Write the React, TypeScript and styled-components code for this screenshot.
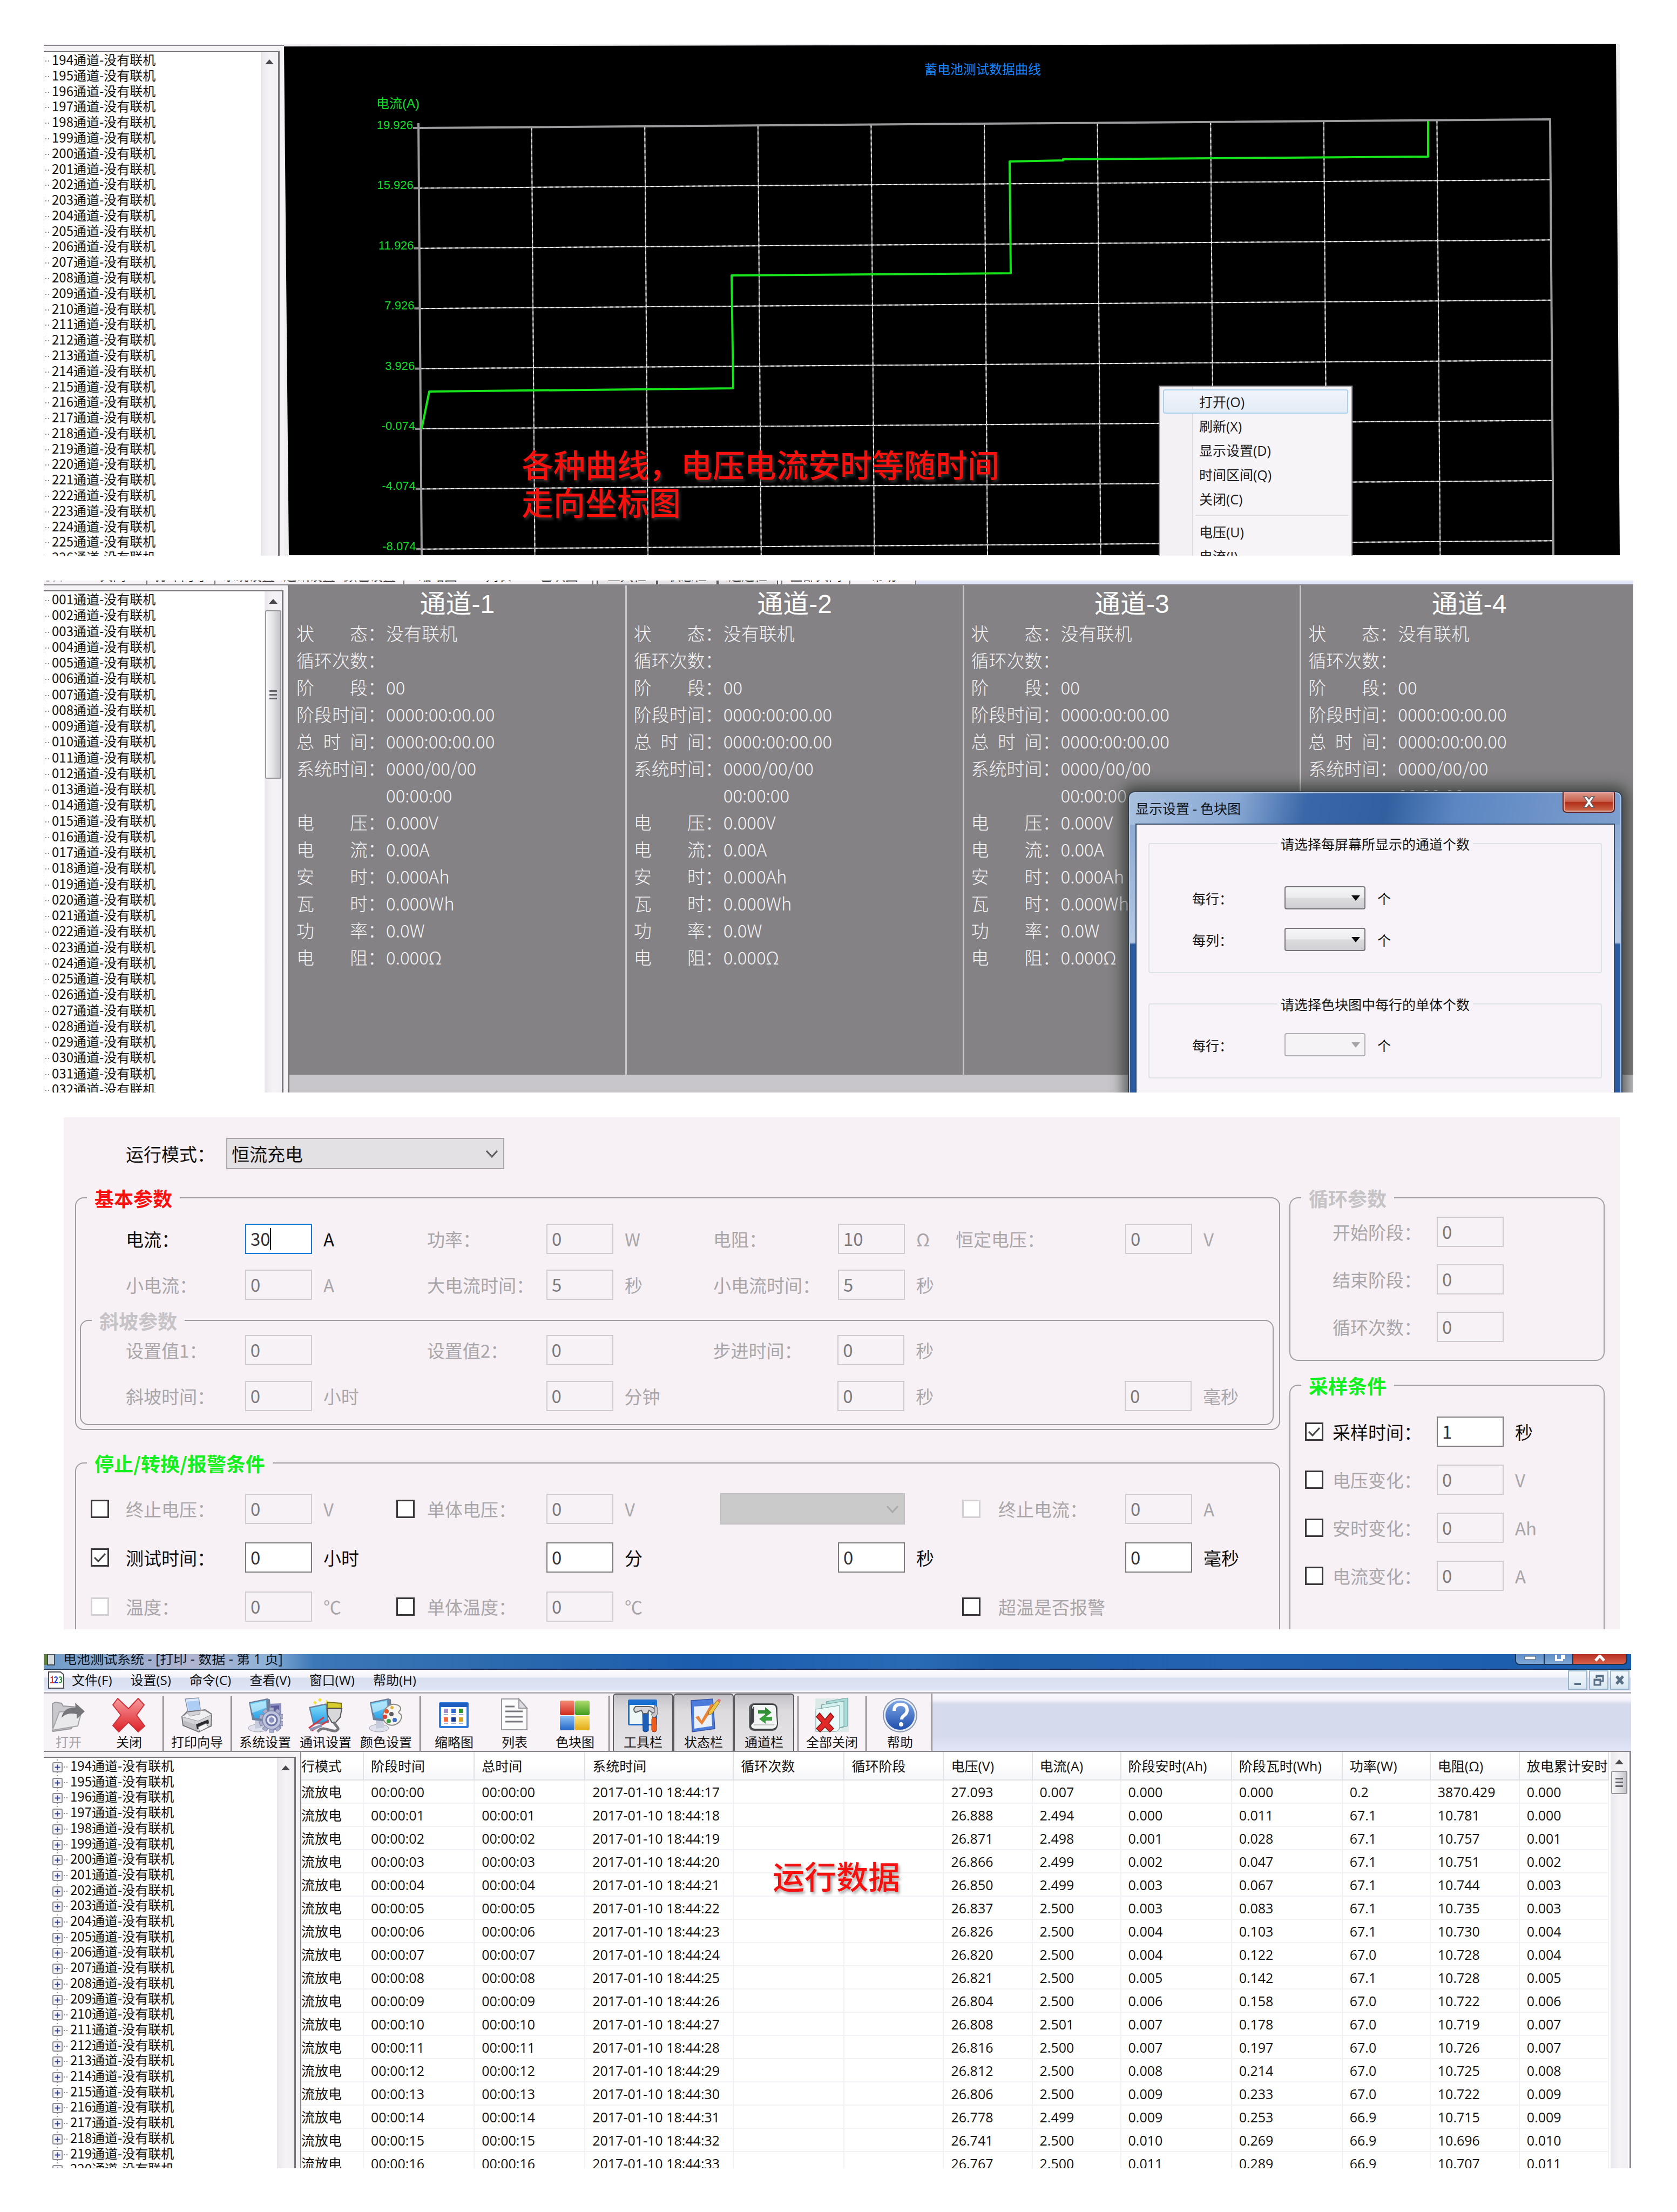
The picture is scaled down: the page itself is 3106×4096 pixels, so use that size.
import React, { useId } from "react";
import styled, { createGlobalStyle, css } from "styled-components";

const UI = `"Liberation Sans", "Noto Sans CJK SC", sans-serif`;
const SEGOE = `"Open Sans", "Noto Sans CJK SC", sans-serif`;
const CJK = `"Noto Sans CJK SC", sans-serif`;

const GlobalStyle = createGlobalStyle`
  *, *::before, *::after { box-sizing: border-box; }
  body { margin: 0; background: #fff; font-family: ${UI}; color: #111; }
  button, input, select { font: inherit; color: inherit; margin: 0; }
  ul, dl, dd, dt, h2, p { margin: 0; padding: 0; list-style: none; font-weight: inherit; }
`;

const Page = styled.main`
  display: flex;
  flex-direction: column;
  gap: 46px;
  padding: 81px 81px 80px;
  background: #fff;
`;

const Panel = styled.section<{ $end?: number; $start?: number; $height?: number }>`
  position: relative;
  height: ${(p) => p.$height ?? 948}px;
  overflow: hidden;
  margin-left: ${(p) => p.$start ?? 0}px;
  margin-right: ${(p) => p.$end ?? 0}px;
  display: flex;
  flex-direction: column;
`;

const Split = styled.div`
  flex: 1;
  min-height: 0;
  display: flex;
`;

/* ---------- channel tree ---------- */

const Sidebar = styled.aside<{ $width: number }>`
  flex: none;
  width: ${(p) => p.$width}px;
  padding: 9px 8px 0 0;
  background: #f6f3f7;
  overflow: hidden;
`;

const TreeFrame = styled.div`
  display: flex;
  height: 1000px;
  background: #fff;
  border-top: 2px solid #77747a;
  border-right: 3px solid #77747a;
`;

const TreeList = styled.ul<{ $height: number; $shift: number }>`
  flex: 1;
  height: ${(p) => p.$height}px;
  margin-left: ${(p) => p.$shift}px;
  display: grid;
  grid-auto-rows: 1fr;
  overflow: hidden;
`;

const TreeRow = styled.li`
  display: flex;
  align-items: center;
  padding-left: 16px;
  font-family: ${CJK};
  font-size: 24px;
  line-height: 28px;
  height: 28px;
  white-space: nowrap;
`;

const Expander = styled.svg`
  flex: none;
  width: 33px;
  height: 28px;
  margin-top: 6px;
`;

const ScrollTrack = styled.div`
  flex: none;
  width: 32px;
  background: linear-gradient(90deg, #e9e7eb, #f5f3f6 50%, #f1eff3);
  display: flex;
  flex-direction: column;
  align-items: center;
`;

const ScrollArrow = styled.span`
  margin: 14px 0 12px;
  border: 8px solid transparent;
  border-top: 0;
  border-bottom: 9px solid #4b494e;
`;

const ScrollThumb = styled.span<{ $height: number }>`
  width: 30px;
  height: ${(p) => p.$height}px;
  border: 2px solid #98969b;
  border-radius: 3px;
  background: linear-gradient(90deg, #f8f8f9, #e2e1e5 50%, #c4c3c9);
  display: flex;
  flex-direction: column;
  align-items: center;
  justify-content: center;
  gap: 4px;
  &::before, &::after { content: ""; width: 14px; height: 3px; background: #67656b; }
`;

const ThumbBar = styled.i`
  width: 14px;
  height: 3px;
  background: #67656b;
`;

const Scrollbar = ({ thumb }: { thumb?: number }) => (
  <ScrollTrack aria-hidden="true">
    <ScrollArrow />
    {thumb && (
      <ScrollThumb $height={thumb}>
        <ThumbBar />
      </ScrollThumb>
    )}
  </ScrollTrack>
);

type TreeProps = { first: number; count: number; height: number; width: number; shift: number; thumb?: number };

const ChannelTree = ({ first, count, height, width, shift, thumb }: TreeProps) => (
  <Sidebar $width={width}>
    <TreeFrame>
      <TreeList $height={height} $shift={shift}>
        {Array.from({ length: count }, (_, i) => (
          <TreeRow key={i}>
            <Expander viewBox="0 0 33 28" aria-hidden="true">
              <path d="M9 0v5M9 23v5M21 14h10" stroke="#8b898e" strokeWidth="2" strokeDasharray="2 3" fill="none" />
              <rect x="1" y="6" width="17" height="17" rx="2" fill="#f4f4f6" stroke="#918f95" strokeWidth="2" />
              <path d="M4.500 14.500h10M9.500 9.500v10" stroke="#37438c" strokeWidth="2" />
            </Expander>
            {String(first + i).padStart(3, "0")}通道-没有联机
          </TreeRow>
        ))}
      </TreeList>
      <Scrollbar thumb={thumb} />
    </TreeFrame>
  </Sidebar>
);

/* ---------- toolbar ---------- */

const ToolbarBar = styled.div`
  flex: none;
  display: flex;
  height: 108px;
  border-bottom: 2px solid #87858b;
  background: linear-gradient(#fbfaff 0, #f3f2fb 12px, #d5daec 20px, #d6daed 75%, #e3e6f8);
`;

const ToolGroup = styled.div`
  display: flex;
  padding-right: 2px;
  background: #f7f3f7;
  border-right: 2px solid #8b898f;
`;

const ToolButton = styled.button<{ $pressed?: boolean; $first?: boolean }>`
  flex: none;
  width: 112px;
  padding: 7px 0 0;
  margin-left: ${(p) => (p.$first ? -10 : 0)}px;
  display: flex;
  flex-direction: column;
  align-items: center;
  border: 0;
  background: none;
  font-family: ${CJK};
  font-size: 24px;
  line-height: 32px;
  white-space: nowrap;
  color: #111;
  ${(p) =>
    p.$pressed &&
    css`
      padding-top: 5px;
      border: 2px solid #5d5b60;
      border-bottom: 0;
      border-radius: 6px 6px 0 0;
      background: linear-gradient(#c4c2c6, #dddbde 30%, #e5e3e6);
    `}
  &:disabled { color: #a5a3a7; }
  svg { width: 66px; height: 66px; flex: none; }
`;

const ToolSeparator = styled.span`
  flex: none;
  width: 2px;
  margin: 4px 6px 0;
  background: #77757a;
`;

const Monitor = () => (
  <>
    <ellipse cx="20" cy="57" rx="18" ry="7" fill="#dfe1ec" stroke="#a0a3b5" />
    <path d="M14 42l14 2 2 12-16 2z" fill="#c8cbdb" />
    <path d="M3 9l34-7 5 2 2 34-8 7-27-3z" fill="#6c7f9b" />
    <path d="M5 11l30-6 3 36-25-3z" fill="url(#screen)" />
    <path d="M6 13l28-6 1 12-26 10z" fill="#d9f2fc" opacity=".6" />
  </>
);

const icons: Record<string, React.ReactNode> = {
  open: (
    <>
      <path d="M3 12l5-3 12 2 3 5 25 2-2 22-8 18-34 5z" fill="#c9c8cc" stroke="#9b999f" strokeWidth="2" />
      <path d="M3 61L16 27l42-4-8 30z" fill="#e9e8eb" stroke="#a7a5aa" strokeWidth="2" />
      <path d="M20 38c2-14 12-20 26-19l-1-9 18 16-15 14v-9c-12-2-20-1-28 7z" fill="#77767b" />
    </>
  ),
  close: (
    <path
      d="M12 2L32 21 50 2 61 14 47 33 62 53 50 64 32 46 14 64 3 52 18 33 3 14z"
      fill="url(#red)"
      stroke="#c8323a"
      strokeWidth="2"
      strokeLinejoin="round"
    />
  ),
  print: (
    <>
      <path d="M11 3l25-2 4 28-22 6z" fill="#dceafc" stroke="#8593ab" strokeWidth="1.500" />
      <path d="M14 8l22-2 3 19-20 5z" fill="#aecdf4" />
      <path d="M5 36l9-9 34-4 12 8-1 22-23 11L7 52z" fill="#d4d4d8" stroke="#77767c" strokeWidth="2" />
      <path d="M5 36l30 8 25-12-12-7-9-1-1 7-18 4-4-6z" fill="#f0f0f3" stroke="#98979d" />
      <path d="M8 43l27 9v10L8 51z" fill="#bcbcc2" />
      <path d="M31 50l23-9 1 7-22 11z" fill="#2d2d31" />
      <path d="M35 55l15-7 4 7-16 8z" fill="#f7f7f8" stroke="#77767c" />
    </>
  ),
  system: (
    <>
      <path d="M40 12l23-1v46l-20 6z" fill="#8e8dc0" />
      <path d="M44 16l15-1v10l-15 3z" fill="#5d5b9c" />
      <Monitor />
      <g transform="translate(45 42)">
        {Array.from({ length: 10 }, (_, i) => (
          <rect key={i} x="-4" y="-23" width="8" height="10" fill="#a9aecb" stroke="#7f86ab" transform={`rotate(${i * 36})`} />
        ))}
        <circle r="17" fill="#bfc3db" stroke="#7f86ab" strokeWidth="1.500" />
        <circle r="10" fill="#e6e8f3" stroke="#6b73a4" strokeWidth="3" />
        <circle r="5" fill="#8990bc" />
      </g>
    </>
  ),
  comm: (
    <>
      <path d="M2 18l33-7 4 36-29 4z" fill="#6c7f9b" />
      <path d="M5 20l28-6 3 30-25 3z" fill="url(#screen)" />
      <path d="M13 6l4 4-3 3-4-3zM22 1l4 3-3 5-4-4zM34 5l6 4-2 5-5-3z" fill="#f4e23c" />
      <path d="M36 9l26 2v9H36z" fill="#d8cc2e" stroke="#77731d" strokeWidth="2" />
      <path d="M36 21h27l-3 16-9 10h-6L37 33z" fill="#d8d8da" stroke="#55545a" strokeWidth="2" />
      <path d="M48 46c8 12 12 12 4 16-10 2-20-8-30-2l-4 4" fill="none" stroke="#77767c" strokeWidth="5" />
      <path d="M2 57l28-20M7 62l32-19" stroke="#cf3b48" strokeWidth="3" />
      <path d="M4 60l22-8" stroke="#8f95b3" strokeWidth="5" />
    </>
  ),
  color: (
    <>
      <Monitor />
      <path d="M50 13c10 2 13 8 7 13-3 4 5 4 5 9-1 12-13 19-23 16-14-4-16-24-3-34 4-3 9-5 14-4z" fill="#f7f5f0" stroke="#8c8a86" strokeWidth="2" />
      <circle cx="34" cy="26" r="4" fill="#e2542c" />
      <circle cx="44" cy="19" r="3" fill="#e4b23a" />
      <circle cx="31" cy="36" r="4" fill="#d6403a" />
      <circle cx="38" cy="44" r="4" fill="#3c9a43" />
      <circle cx="49" cy="42" r="4" fill="#3b6dc8" />
      <circle cx="43" cy="31" r="4" fill="#5d5b60" />
    </>
  ),
  thumbs: (
    <>
      <rect x="5" y="9" width="55" height="48" rx="3" fill="#2f7bdb" />
      <rect x="9" y="18" width="47" height="35" fill="#fff" />
      <rect x="7" y="10" width="51" height="8" fill="#1e5fc0" />
      {["#9d8fc7", "#2d6bd8", "#2b962f", "#f06a3c", "#173b94", "#d6a32a"].map((c, i) => (
        <g key={c}>
          <rect x={14 + (i % 3) * 14} y={i < 3 ? 21 : 37} width="8" height="8" fill={c} />
          <rect x={14 + (i % 3) * 14} y={i < 3 ? 31 : 47} width="8" height="2" fill="#9cb3d8" />
        </g>
      ))}
    </>
  ),
  list: (
    <>
      <path d="M9 3h32l15 17v40H9z" fill="#fbfbfc" stroke="#9b999f" strokeWidth="2" />
      <path d="M41 3v17h15z" fill="#dddce0" stroke="#9b999f" strokeWidth="2" />
      <path d="M16 17h17M16 26h32M16 36h32M16 45h32" stroke="#7b797f" strokeWidth="3" />
    </>
  ),
  blocks: (
    <>
      <rect x="5" y="6" width="27" height="27" rx="3" fill="url(#blockRed)" />
      <rect x="33" y="6" width="27" height="27" rx="3" fill="url(#blockGreen)" />
      <rect x="5" y="34" width="27" height="27" rx="3" fill="url(#blockBlue)" />
      <rect x="33" y="34" width="27" height="27" rx="3" fill="url(#blockYellow)" />
    </>
  ),
  tools: (
    <>
      <rect x="5" y="4" width="54" height="48" rx="3" fill="#1b6fd0" />
      <rect x="8" y="14" width="48" height="35" fill="#ecf7f6" />
      <path d="M32 28l11-2v36q-6 4-10 0z" fill="#1c5fb8" stroke="#123f80" />
      <path d="M19 17h25q10 0 12 10l-5 2-7-5-3 6H33l-3-6-11 4q-6-5 0-11z" fill="#d4d4d8" stroke="#626167" strokeWidth="2" />
      <path d="M54 14l6 5v12l-5 6v6h-4v-6l-3-6 6-3z" fill="#c5c5ca" stroke="#66656b" />
      <rect x="49" y="37" width="9" height="27" rx="4" fill="#ef5b1c" stroke="#a23a0b" />
    </>
  ),
  status: (
    <>
      <path d="M10 6l40-3 4 55-42 6z" fill="#4d7bdc" stroke="#3454a4" strokeWidth="1.500" />
      <path d="M15 17l32-2 2 38-33 5z" fill="#eaf0fa" />
      <path d="M18 37l6-3 5 9 18-31 7 3-24 36z" fill="#e8853a" />
      <path d="M43 26L58 6l5 3-14 21-7 3z" fill="#f1c23f" stroke="#8e6d21" />
      <path d="M58 6l2-3q5 0 5 3l-2 3z" fill="#dd7777" />
    </>
  ),
  channel: (
    <>
      <rect x="5" y="11" width="53" height="51" rx="9" fill="#5c5f61" />
      <path d="M15 13h33q8 0 8 8l2 27q0 10-9 11H16q-8 0-8-8l2-31q0-7 5-7z" fill="#f3f4f4" stroke="#3d3f41" strokeWidth="2" />
      <path d="M9 24l6-8v29l-7 8z" fill="#3f4244" />
      <path d="M22 24h13v-6l12 10-12 9v-7H22z" fill="#2f8f33" />
      <path d="M48 36H36v-5L24 40l12 9v-6h12z" fill="#3aa03e" />
      <path d="M14 51h38" stroke="#c1c3c4" strokeWidth="2" />
    </>
  ),
  closeAll: (
    <>
      <rect x="2" y="2" width="62" height="62" fill="#dbe9e9" />
      <path d="M22 8l40-7v52l-34 9z" fill="#a9dcd8" stroke="#75a09d" />
      <path d="M13 14l42-7v47l-36 9z" fill="#d3f1ee" stroke="#75a09d" />
      <path d="M3 22l44-7v42l-6 6H3z" fill="#ecfbf9" stroke="#75a09d" />
      <path
        d="M10 29l10 12 10-12 6 7-9 12 9 10-7 6-9-9-9 9-7-6 10-11-10-11z"
        fill="#e02a2a"
        stroke="#8b1010"
        strokeWidth="1.500"
      />
    </>
  ),
  help: (
    <>
      <circle cx="33" cy="33" r="32" fill="#8a97ac" />
      <circle cx="33" cy="33" r="30" fill="#e9eef6" />
      <circle cx="33" cy="33" r="27" fill="url(#helpBlue)" />
      <path d="M22 25q0-12 12-12 12 0 12 11 0 6-6 10-4 3-4 7" fill="none" stroke="#fff" strokeWidth="6" />
      <circle cx="35" cy="50" r="4" fill="#fff" />
    </>
  ),
};

const Defs = styled.svg`
  position: absolute;
`;

const Gradients = () => (
  <Defs width="0" height="0" aria-hidden="true">
    <defs>
      {[
        ["screen", "#7fdcfb", "#2b9fe6"],
        ["red", "#f79a9c", "#dd2027"],
        ["blockRed", "#f58a76", "#cf2b1d"],
        ["blockGreen", "#b0dc6d", "#3f9b1b"],
        ["blockBlue", "#8cc0f5", "#2467c9"],
        ["blockYellow", "#fbe87b", "#e2a914"],
        ["helpBlue", "#7ea6e4", "#1f4fae"],
      ].map(([id, a, b]) => (
        <linearGradient key={id} id={id} x1="0" y1="0" x2="0" y2="1">
          <stop offset="0" stopColor={a} />
          <stop offset="1" stopColor={b} />
        </linearGradient>
      ))}
    </defs>
  </Defs>
);

const tools: ([string, string] | null)[] = [
  ["open", "打开"],
  ["close", "关闭"],
  null,
  ["print", "打印向导"],
  null,
  ["system", "系统设置"],
  ["comm", "通讯设置"],
  ["color", "颜色设置"],
  null,
  ["thumbs", "缩略图"],
  ["list", "列表"],
  ["blocks", "色块图"],
  null,
  ["tools", "工具栏"],
  ["status", "状态栏"],
  ["channel", "通道栏"],
  null,
  ["closeAll", "全部关闭"],
  null,
  ["help", "帮助"],
];
const pressed = ["tools", "status", "channel"];

const Toolbar = () => (
  <ToolbarBar>
    <ToolGroup>
      {tools.map((t, i) =>
        t ? (
          <ToolButton key={i} type="button" $first={i === 0} $pressed={pressed.includes(t[0])} disabled={t[0] === "open"}>
            <svg viewBox="0 0 66 66" aria-hidden="true">{icons[t[0]]}</svg>
            {t[1]}
          </ToolButton>
        ) : (
          <ToolSeparator key={i} />
        )
      )}
    </ToolGroup>
  </ToolbarBar>
);

/* Bottom edge of a toolbar that is scrolled out of view. */
const ToolbarSliver = styled.div<{ $height: number }>`
  flex: none;
  height: ${(p) => p.$height}px;
  overflow: hidden;
  display: flex;
  flex-direction: column;
  justify-content: flex-end;
  ${ToolGroup} { margin-left: -30px; }
`;

const SliverLine = styled.div`
  flex: none;
  height: 4px;
  background: #f6f3f7;
  border-bottom: 2px solid #8b898f;
`;

/* ---------- curve panel ---------- */

const ChartArea = styled.div`
  position: relative;
  flex: 1;
  min-width: 0;
  margin-top: -4px;
  background: #f0eef1;
`;

const ChartSvg = styled.svg`
  display: block;
  width: 100%;
  text { font-family: ${UI}; }
`;

const Note = styled.p<{ $left: number; $top: number }>`
  position: absolute;
  left: ${(p) => p.$left}px;
  top: ${(p) => p.$top}px;
  font-family: ${CJK};
  font-size: 59px;
  font-weight: 500;
  line-height: 70px;
  color: #f5110d;
  white-space: pre;
  text-shadow: 3px 4px 5px rgba(90, 90, 90, 0.55);
`;

const Menu = styled.div`
  position: absolute;
  left: 1620px;
  top: 633px;
  width: 359px;
  padding: 5px 6px;
  border: 2px solid #979599;
  background: linear-gradient(90deg, #f4f1f5 60px, #dedbe0 60px, #dedbe0 61px, #f7f4f8 62px);
`;

const MenuButton = styled.button<{ $hot?: boolean }>`
  display: block;
  width: 100%;
  height: 45px;
  padding: 0 0 0 65px;
  border: 2px solid ${(p) => (p.$hot ? "#aad1f0" : "transparent")};
  border-radius: 4px;
  background: ${(p) => (p.$hot ? "linear-gradient(#f1f5fb, #e2ebf5)" : "none")};
  font-family: ${SEGOE};
  font-size: 25px;
  line-height: 40px;
  text-align: left;
  color: #1a1a1c;
`;

const MenuRule = styled.hr`
  height: 2px;
  margin: 7px 0 7px 60px;
  border: 0;
  background: #dedbe0;
`;

const rows = ["19.926", "15.926", "11.926", "7.926", "3.926", "-0.074", "-4.074", "-8.074"];

const CurveChart = () => (
  <ChartSvg viewBox="526 81 2474 947" role="img" aria-label="蓄电池测试数据曲线">
    <path d="M526 81V85H80z" fill="none" />
    <path d="M526 86L2993 81L3000 1028H535z" fill="#000" />
    <text x="1820" y="137" fontSize="24" fill="#1686ff" textAnchor="middle">蓄电池测试数据曲线</text>
    <text x="697" y="200" fontSize="24" fill="#14dc28">电流(A)</text>
    {rows.map((label, i) => {
      const y = 237 + i * 111.4;
      const x = 775 + i * 0.8;
      return (
        <g key={label}>
          <text x={x - 10} y={y + 2} fontSize="22" fill="#14dc28" textAnchor="end">{label}</text>
          <path d={`M${x - 10} ${y}h12`} stroke="#8d8d8f" strokeWidth="4" />
          {i > 0 && <path d={`M${x} ${y}L${2871 + i * 0.8} ${y - 15.5}`} stroke="#b4b4b4" strokeWidth="2" />}
          {i > 0 && <path d={`M${x} ${y}L${2871 + i * 0.8} ${y - 15.5}`} stroke="#eee" strokeWidth="2" strokeDasharray="6 5" />}
        </g>
      );
    })}
    {Array.from({ length: 9 }, (_, i) => {
      const x = 775 + (i + 1) * 209.6;
      const y = 237 - (i + 1) * 1.6;
      return (
        <g key={i}>
          <path d={`M${x} ${y}L${x + 6} 1028`} stroke="#9d9d9d" strokeWidth="2" />
          <path d={`M${x} ${y}L${x + 6} 1028`} stroke="#e4e4e4" strokeWidth="2" strokeDasharray="6 5" />
        </g>
      );
    })}
    <path d="M775 228L781 1028M775 237L2871 221L2877 1028" fill="none" stroke="#9b9b9d" strokeWidth="4" />
    <path
      d="M781 794L795 725L1358 719L1355 510L1872 506L1870 299L1969 297V295L2645 290V224"
      fill="none"
      stroke="#17e41d"
      strokeWidth="4"
      strokeLinejoin="round"
    />
  </ChartSvg>
);

const CurvePanel = () => (
  <Panel $end={25}>
    <SliverLine />
    <Split>
      <ChannelTree first={194} count={33} height={950} width={445} shift={-34} />
      <ChartArea>
        <CurveChart />
        <Note $left={440} $top={743}>{"各种曲线，电压电流安时等随时间\n走向坐标图"}</Note>
        <Menu role="menu">
          <MenuButton role="menuitem" $hot>打开(O)</MenuButton>
          <MenuButton role="menuitem">刷新(X)</MenuButton>
          <MenuButton role="menuitem">显示设置(D)</MenuButton>
          <MenuButton role="menuitem">时间区间(Q)</MenuButton>
          <MenuButton role="menuitem">关闭(C)</MenuButton>
          <MenuRule />
          <MenuButton role="menuitem">电压(U)</MenuButton>
          <MenuButton role="menuitem">电流(I)</MenuButton>
        </Menu>
      </ChartArea>
    </Split>
  </Panel>
);

/* ---------- channel cards panel ---------- */

const CardsArea = styled.div`
  position: relative;
  flex: 1;
  min-width: 0;
  overflow: hidden;
  background: #c8c6ca;
  border-left: 3px solid #78767b;
`;

const Cards = styled.div`
  display: grid;
  grid-template-columns: repeat(4, 1fr);
  margin-right: -10px;
  height: 906px;
  background: #848284;
`;

const Card = styled.article`
  padding: 7px 0 0 13px;
  border-right: 3px solid #c9c7cb;
  color: #f4f3f4;
`;

const CardTitle = styled.h2`
  padding-right: 13px;
  font-size: 48px;
  line-height: 56px;
  text-align: center;
  color: #fff;
`;

const CardRow = styled.div`
  display: flex;
  font-family: ${CJK};
  font-size: 33px;
  font-weight: 300;
  line-height: 50px;
  height: 50px;
  white-space: pre;
`;

const CardTerm = styled.dt`
  width: 166px;
`;

const readings: [string, string][] = [
  ["状　　态：", "没有联机"],
  ["循环次数：", ""],
  ["阶　　段：", "00"],
  ["阶段时间：", "0000:00:00.00"],
  ["总\u2002时\u2002间：", "0000:00:00.00"],
  ["系统时间：", "0000/00/00"],
  ["", "00:00:00"],
  ["电　　压：", "0.000V"],
  ["电　　流：", "0.00A"],
  ["安　　时：", "0.000Ah"],
  ["瓦　　时：", "0.000Wh"],
  ["功　　率：", "0.0W"],
  ["电　　阻：", "0.000Ω"],
];

const Dialog = styled.div`
  position: absolute;
  top: 381px;
  right: 20px;
  width: 916px;
  height: 640px;
  padding: 0 12px;
  border: 2px solid #33404f;
  border-radius: 12px 12px 0 0;
  background: linear-gradient(100deg, #a9c0de 0, #88a8d4 22%, #3a67a8 36%, #315f9f 52%, #5b86c2 66%, #7e9fce 100%) top / 100% 60px no-repeat,
    linear-gradient(#8fabd3 60px, #b4c8e4 278px, #2c5c9f 282px, #2c5c9f);
  box-shadow: 0 0 24px 10px rgba(25, 32, 28, 0.6), inset 0 0 0 2px #b3c8e6;
`;

const DialogTitle = styled.header`
  height: 58px;
  display: flex;
  align-items: center;
  justify-content: space-between;
  font-family: ${CJK};
  font-size: 25px;
  color: #101418;
`;

const DialogClose = styled.button`
  align-self: flex-start;
  width: 97px;
  height: 38px;
  padding: 0;
  border: 2px solid #5a2224;
  border-top: 0;
  border-radius: 0 0 7px 7px;
  background: linear-gradient(#d99a8d, #c9604d 48%, #b02c17 52%, #cf6a4c);
  box-shadow: inset 0 0 0 2px #e5aca2;
  svg { display: block; margin: 0 auto; width: 26px; height: 24px; }
`;

const CloseGlyph = () => (
  <svg viewBox="0 0 26 24" aria-hidden="true">
    <path d="M3 2h6l4 5 4-5h6l-7 10 7 10h-6l-4-5-4 5H3l7-10z" fill="#fff" stroke="#5c5b62" strokeWidth="1.500" />
  </svg>
);

const DialogBody = styled.div`
  height: 600px;
  padding: 20px 22px 0 22px;
  border: 2px solid #33496a;
  background: #f7f3f8;
  font-family: ${CJK};
  font-size: 25px;
`;

const DialogGroup = styled.fieldset<{ $gap: number; $top: number }>`
  min-width: 0;
  margin: ${(p) => p.$gap}px 0 0;
  padding: ${(p) => p.$top}px 0 22px;
  border: 2px solid #dde3e7;
  border-radius: 4px;
  legend {
    margin: 0 auto;
    padding: 0 6px;
    line-height: 30px;
  }
`;

const DialogRow = styled.div`
  display: flex;
  align-items: center;
  height: 77px;
  padding-left: 79px;
  label { width: 171px; }
`;

const SelectBox = styled.span`
  position: relative;
  width: 150px;
  margin-right: 22px;
  svg { position: absolute; right: 10px; top: 17px; width: 16px; height: 10px; pointer-events: none; }
`;

const ClassicSelect = styled.select`
  display: block;
  appearance: none;
  width: 100%;
  height: 43px;
  border: 2px solid #77757a;
  border-radius: 4px;
  background: linear-gradient(#f6f5f7, #ecebed 48%, #dcdbde 52%, #cfced2);
  &:disabled { border-color: #b1afb3; background: #f5f3f6; opacity: 1; }
`;

const CountPicker = ({ label, disabled }: { label: string; disabled?: boolean }) => {
  const id = useId();
  return (
    <DialogRow>
      <label htmlFor={id}>{label}</label>
      <SelectBox>
        <ClassicSelect id={id} disabled={disabled} />
        <svg viewBox="0 0 16 10" aria-hidden="true">
          <path d="M0 0h16L8 10z" fill={disabled ? "#a5a3a8" : "#0c0c0d"} />
        </svg>
      </SelectBox>
      个
    </DialogRow>
  );
};

const CardsPanel = () => (
  <Panel>
    <ToolbarSliver $height={9}>
      <Toolbar />
    </ToolbarSliver>
    <Split>
      <ChannelTree first={1} count={32} height={936} width={452} shift={-34} thumb={312} />
      <CardsArea>
        <Cards>
          {[1, 2, 3, 4].map((n) => (
            <Card key={n}>
              <CardTitle>通道-{n}</CardTitle>
              <dl>
                {readings.map(([term, value], i) => (
                  <CardRow key={i}>
                    <CardTerm>{term}</CardTerm>
                    <dd>{value}</dd>
                  </CardRow>
                ))}
              </dl>
            </Card>
          ))}
        </Cards>
        <Dialog role="dialog" aria-label="显示设置 - 色块图">
          <DialogTitle>
            显示设置 - 色块图
            <DialogClose type="button" aria-label="关闭">
              <CloseGlyph />
            </DialogClose>
          </DialogTitle>
          <DialogBody>
            <DialogGroup $gap={0} $top={47}>
              <legend>请选择每屏幕所显示的通道个数</legend>
              <CountPicker label="每行：" />
              <CountPicker label="每列：" />
            </DialogGroup>
            <DialogGroup $gap={42} $top={22}>
              <legend>请选择色块图中每行的单体个数</legend>
              <CountPicker label="每行：" disabled />
            </DialogGroup>
          </DialogBody>
        </Dialog>
      </CardsArea>
    </Split>
  </Panel>
);

/* ---------- parameter form panel ---------- */

const FormPanel = styled(Panel)`
  padding: 38px 28px 0 21px;
  background: #f7f1f5;
  font-family: ${CJK};
  font-size: 33px;
  line-height: 40px;
`;

const ModeRow = styled.div`
  flex: none;
  display: flex;
  align-items: center;
  padding-left: 94px;
  margin-bottom: 33px;
  label { width: 186px; }
`;

const FlatSelectBox = styled.span<{ $wide?: boolean }>`
  position: relative;
  ${(p) =>
    p.$wide
      ? "width: 515px;"
      : "grid-column: 9 / 11; margin-left: 13px;"}
  svg { position: absolute; right: 10px; top: 22px; width: 26px; height: 16px; }
`;

const FlatSelect = styled.select`
  display: block;
  appearance: none;
  width: 100%;
  height: 58px;
  padding: 0 8px;
  border: 2px solid #a9a7aa;
  border-radius: 0;
  background: #e4e1e4;
  &:disabled { background: #cacaca; border-color: #c0bfc1; opacity: 1; }
`;

const Chevron = ({ color }: { color: string }) => (
  <svg viewBox="0 0 26 16" aria-hidden="true">
    <path d="M3 2l10 11L23 2" fill="none" stroke={color} strokeWidth="3" />
  </svg>
);

const FormBody = styled.div`
  flex: 1;
  display: flex;
  gap: 17px;
`;

const LeftColumn = styled.div`
  flex: 1;
  min-width: 0;
`;

const RightColumn = styled.div`
  flex: none;
  width: 584px;
`;

const Group = styled.fieldset<{ $pad: string; $gap?: number; $nested?: boolean; $tall?: boolean }>`
  min-width: 0;
  margin: ${(p) => p.$gap ?? 0}px ${(p) => (p.$nested ? 10 : 0)}px 0 ${(p) => (p.$nested ? 7 : 0)}px;
  padding: ${(p) => p.$pad};
  border: 2px solid #a09da1;
  border-radius: 16px;
  ${(p) => p.$tall && "height: 520px;"}
`;

const Legend = styled.legend<{ $color: string }>`
  margin-left: 20px;
  padding: 0 14px;
  font-size: 36px;
  font-weight: 700;
  line-height: 40px;
  color: ${(p) => p.$color};
`;

const Rows = styled.div<{ $gap: number }>`
  display: grid;
  gap: ${(p) => p.$gap}px;
`;

const FieldRow = styled.div<{ $nested?: boolean }>`
  display: grid;
  grid-template-columns:
    minmax(0, 72fr) minmax(0, 221fr) minmax(0, 124fr) minmax(0, 156fr)
    minmax(0, 57fr) minmax(0, 221fr) minmax(0, 124fr) minmax(0, 185fr)
    minmax(0, 231fr) minmax(0, 124fr) minmax(0, 94fr)
    minmax(0, 314fr) minmax(0, 124fr) minmax(0, 150fr);
  align-items: center;
  height: 56px;
  padding: ${(p) => (p.$nested ? "0 0 0 11px" : "0 11px 0 20px")};
`;

const SideRow = styled.div`
  display: grid;
  grid-template-columns: 58px 193px 124px 1fr;
  align-items: center;
  height: 56px;
  padding-left: 20px;
`;

const Cell = styled.span<{ $col: number; $on?: boolean; $inset?: boolean }>`
  grid-column: ${(p) => p.$col};
  grid-row: 1;
  display: flex;
  align-items: center;
  gap: 33px;
  padding-left: ${(p) => (p.$inset ? 12 : 0)}px;
  white-space: nowrap;
  color: ${(p) => (p.$on ? "#0c0c0d" : "#a9a6a9")};
`;

const Unit = styled(Cell)`
  padding-left: 21px;
`;

const Check = styled.input`
  appearance: none;
  flex: none;
  width: 34px;
  height: 34px;
  border: 3px solid #39373a;
  background: #fff;
  &:disabled { border-color: #d3d0d3; }
  &:checked {
    background: #fff
      url("data:image/svg+xml,%3Csvg xmlns='http://www.w3.org/2000/svg' viewBox='0 0 28 28'%3E%3Cpath d='M4 14l7 7L24 7' fill='none' stroke='%23454347' stroke-width='3'/%3E%3C/svg%3E")
      center / 28px 28px no-repeat;
  }
`;

const CheckCell = styled(Cell)<{ $first?: boolean }>`
  padding-left: ${(p) => (p.$first ? 7 : 0)}px;
`;

const TextBox = styled.input<{ $focus?: boolean }>`
  display: block;
  width: 100%;
  height: 56px;
  padding: 0 0 3px 8px;
  border: 2px solid ${(p) => (p.$focus ? "#0f7ad8" : "#7d7b7e")};
  border-radius: 0;
  background: #fff;
  color: #333135;
  outline: 0;
  font-family: ${CJK};
  font-size: 33px;
  &:disabled { background: #f7f2f6; border-color: #cfcbcf; color: #7d7a7e; }
`;

const BoxCell = styled.span<{ $col: number }>`
  position: relative;
  grid-column: ${(p) => p.$col};
  grid-row: 1;
`;

const Caret = styled.i`
  position: absolute;
  left: 46px;
  top: 8px;
  width: 2px;
  height: 40px;
  background: #000;
`;

type FieldDef = {
  g: 1 | 2 | 3 | 4;
  label?: string;
  value?: string;
  unit?: string;
  on?: boolean;
  check?: "off" | "on" | "disabled";
  focus?: boolean;
};

const starts = { 1: 1, 2: 5, 3: 8, 4: 11 };

const Field = ({ g, label, value, unit, on, check, focus }: FieldDef) => {
  const id = useId();
  const c = starts[g];
  const box = check && (
    <Check type="checkbox" id={id + "c"} defaultChecked={check === "on"} disabled={check === "disabled"} />
  );
  return (
    <>
      {box && g !== 4 && <CheckCell $col={c} $first={g === 1}>{box}</CheckCell>}
      {label && (
        <Cell $col={c + 1} $on={on} $inset={g === 4 && !!check}>
          {g === 4 && box}
          <label htmlFor={check ? id + "c" : id}>{label}</label>
        </Cell>
      )}
      {value !== undefined && (
        <BoxCell $col={c + 2}>
          <TextBox id={id} aria-label={check || !label ? (label ?? "") + (unit ?? "") : undefined} defaultValue={value} disabled={!on} $focus={focus} />
          {focus && <Caret />}
        </BoxCell>
      )}
      {unit && <Unit $col={c + 3} $on={on}>{unit}</Unit>}
    </>
  );
};

const ParameterPanel = () => {
  const modeId = useId();
  return (
    <FormPanel $start={37} $end={25}>
      <ModeRow>
        <label htmlFor={modeId}>运行模式：</label>
        <FlatSelectBox $wide>
          <FlatSelect id={modeId}>
            <option>恒流充电</option>
          </FlatSelect>
          <Chevron color="#5d5b5f" />
        </FlatSelectBox>
      </ModeRow>
      <FormBody>
        <LeftColumn>
          <Group $pad="28px 0 7px">
            <Legend $color="#fa0f0f">基本参数</Legend>
            <Rows $gap={29}>
              <FieldRow>
                <Field g={1} label="电流：" value="30" unit="A" on focus />
                <Field g={2} label="功率：" value="0" unit="W" />
                <Field g={3} label="电阻：" value="10" unit="Ω" />
                <Field g={4} label="恒定电压：" value="0" unit="V" />
              </FieldRow>
              <FieldRow>
                <Field g={1} label="小电流：" value="0" unit="A" />
                <Field g={2} label="大电流时间：" value="5" unit="秒" />
                <Field g={3} label="小电流时间：" value="5" unit="秒" />
              </FieldRow>
            </Rows>
            <Group $pad="7px 0 24px" $gap={18} $nested>
              <Legend $color="#c6c3c6">斜坡参数</Legend>
              <Rows $gap={29}>
                <FieldRow $nested>
                  <Field g={1} label="设置值1：" value="0" />
                  <Field g={2} label="设置值2：" value="0" />
                  <Field g={3} label="步进时间：" value="0" unit="秒" />
                </FieldRow>
                <FieldRow $nested>
                  <Field g={1} label="斜坡时间：" value="0" unit="小时" />
                  <Field g={2} value="0" unit="分钟" />
                  <Field g={3} value="0" unit="秒" />
                  <Field g={4} value="0" unit="毫秒" />
                </FieldRow>
              </Rows>
            </Group>
          </Group>
          <Group $pad="36px 0 0" $gap={41} $tall>
            <Legend $color="#14f01e">停止/转换/报警条件</Legend>
            <Rows $gap={35}>
              <FieldRow>
                <Field g={1} label="终止电压：" value="0" unit="V" check="off" />
                <Field g={2} label="单体电压：" value="0" unit="V" check="off" />
                <FlatSelectBox>
                  <FlatSelect disabled aria-label="条件" />
                  <Chevron color="#a9a8aa" />
                </FlatSelectBox>
                <Field g={4} label="终止电流：" value="0" unit="A" check="disabled" />
              </FieldRow>
              <FieldRow>
                <Field g={1} label="测试时间：" value="0" unit="小时" check="on" on />
                <Field g={2} value="0" unit="分" on />
                <Field g={3} value="0" unit="秒" on />
                <Field g={4} value="0" unit="毫秒" on />
              </FieldRow>
              <FieldRow>
                <Field g={1} label="温度：" value="0" unit="℃" check="disabled" />
                <Field g={2} label="单体温度：" value="0" unit="℃" check="off" />
                <Field g={4} label="超温是否报警" check="off" />
              </FieldRow>
            </Rows>
          </Group>
        </LeftColumn>
        <RightColumn>
          <Group $pad="15px 0 33px">
            <Legend $color="#c6c3c6">循环参数</Legend>
            <Rows $gap={32}>
              {["开始阶段：", "结束阶段：", "循环次数："].map((label) => (
                <SideRow key={label}>
                  <Field g={1} label={label} value="0" />
                </SideRow>
              ))}
            </Rows>
          </Group>
          <Group $pad="38px 0 0" $gap={25} $tall>
            <Legend $color="#14f01e">采样条件</Legend>
            <Rows $gap={33}>
              <SideRow>
                <Field g={1} label="采样时间：" value="1" unit="秒" check="on" on />
              </SideRow>
              <SideRow>
                <Field g={1} label="电压变化：" value="0" unit="V" check="off" />
              </SideRow>
              <SideRow>
                <Field g={1} label="安时变化：" value="0" unit="Ah" check="off" />
              </SideRow>
              <SideRow>
                <Field g={1} label="电流变化：" value="0" unit="A" check="off" />
              </SideRow>
            </Rows>
          </Group>
        </RightColumn>
      </FormBody>
    </FormPanel>
  );
};

/* ---------- data window panel ---------- */

const TitleBar = styled.header`
  flex: none;
  display: flex;
  height: 29px;
  overflow: hidden;
  border-bottom: 2px solid #1b3557;
  background: linear-gradient(90deg, #6d9bc9 0, #b3b5cf 9%, #8fb2d8 14%, #3c78b8 17%, #2a68ad 30%, #1a5cae 42%, #2a6bb5 55%, #1f5ea8 60%, #2363b0 75%, #1a5cae 100%);
  font-family: ${SEGOE};
  font-size: 25px;
  line-height: 16px;
  color: #0b1622;
  white-space: pre;
`;

const AppIcon = styled.svg`
  width: 26px;
  height: 24px;
  margin-right: 10px;
`;

const WindowButtons = styled.div`
  display: flex;
  height: 20px;
  margin: 0 7px 0 auto;
  border: 2px solid #1c3453;
  border-top: 0;
  border-radius: 0 0 8px 8px;
  overflow: hidden;
  button {
    width: 53px;
    padding: 0;
    border: 0;
    border-right: 2px solid #1c3453;
    background: linear-gradient(#5f8fc6, #7ea7d6);
  }
  button:last-child { width: 98px; border-right: 0; background: linear-gradient(#b83021, #d5604a); }
  svg { display: block; margin: 0 auto; width: 28px; height: 16px; }
`;

const MenuBar = styled.nav`
  flex: none;
  display: flex;
  align-items: center;
  gap: 34px;
  height: 44px;
  padding: 0 3px 3px 8px;
  border-bottom: 3px solid #b4b2b8;
  background: linear-gradient(#fdfcff 0, #f3f3fa 14px, #d8dfee 15px, #dfe5f6 38px, #f7f6fa 39px);
  font-family: ${SEGOE};
  font-size: 24px;
  line-height: 32px;
`;

const BarItem = styled.button`
  padding: 0;
  border: 0;
  background: none;
`;

const DocIcon = styled.svg`
  width: 30px;
  height: 32px;
  margin-right: -20px;
`;

const DocButtons = styled.div`
  display: flex;
  gap: 3px;
  margin-left: auto;
  button {
    width: 36px;
    height: 36px;
    padding: 0;
    border: 2px solid #98b4ca;
    background: linear-gradient(#f3f8fc, #d9e7f2);
  }
  svg { display: block; width: 32px; height: 32px; }
`;

const TableArea = styled.div`
  position: relative;
  flex: 1;
  min-width: 0;
  display: flex;
  align-items: flex-start;
  background: #fff;
  border-left: 2px solid #8b898f;
  border-right: 3px solid #8b898f;
`;

const DataTable = styled.table`
  flex: 1;
  min-width: 0;
  table-layout: fixed;
  border-collapse: separate;
  border-spacing: 0;
  font-family: ${SEGOE};
  font-size: 25px;
  line-height: 36px;
  white-space: nowrap;
  th, td {
    height: 43px;
    padding: 0 0 0 13px;
    text-align: left;
    font-weight: 400;
    overflow: hidden;
    border-right: 2px solid #f2f1f5;
    border-bottom: 2px solid #f2f1f5;
  }
  th {
    height: 53px;
    border-color: #e2e1e7;
    background: linear-gradient(#fff 45%, #f5f6f9);
  }
  th:first-child, td:first-child { padding-left: 0; }
`;

const TableScroll = styled.div`
  align-self: stretch;
  display: flex;
  margin: 0 3px 0 3px;
`;

const columns: [string, number][] = [
  ["行模式", 116],
  ["阶段时间", 205],
  ["总时间", 205],
  ["系统时间", 275],
  ["循环次数", 205],
  ["循环阶段", 184],
  ["电压(V)", 164],
  ["电流(A)", 164],
  ["阶段安时(Ah)", 205],
  ["阶段瓦时(Wh)", 205],
  ["功率(W)", 163],
  ["电阻(Ω)", 165],
  ["放电累计安时", 165],
];

const samples = [
  "27.093 0.007 0.000 0.000 0.2 3870.429 0.000",
  "26.888 2.494 0.000 0.011 67.1 10.781 0.000",
  "26.871 2.498 0.001 0.028 67.1 10.757 0.001",
  "26.866 2.499 0.002 0.047 67.1 10.751 0.002",
  "26.850 2.499 0.003 0.067 67.1 10.744 0.003",
  "26.837 2.500 0.003 0.083 67.1 10.735 0.003",
  "26.826 2.500 0.004 0.103 67.1 10.730 0.004",
  "26.820 2.500 0.004 0.122 67.0 10.728 0.004",
  "26.821 2.500 0.005 0.142 67.1 10.728 0.005",
  "26.804 2.500 0.006 0.158 67.0 10.722 0.006",
  "26.808 2.501 0.007 0.178 67.0 10.719 0.007",
  "26.816 2.500 0.007 0.197 67.0 10.726 0.007",
  "26.812 2.500 0.008 0.214 67.0 10.725 0.008",
  "26.806 2.500 0.009 0.233 67.0 10.722 0.009",
  "26.778 2.499 0.009 0.253 66.9 10.715 0.009",
  "26.741 2.500 0.010 0.269 66.9 10.696 0.010",
  "26.767 2.500 0.011 0.289 66.9 10.707 0.011",
];

const tableRows = samples.map((line, i) => {
  const t = "00:00:" + String(i).padStart(2, "0");
  return ["流放电", t, t, "2017-01-10 18:44:" + (17 + i), "", "", ...line.split(" ")];
});

const DataPanel = () => (
  <Panel $end={4} $height={952}>
    <TitleBar>
      <AppIcon viewBox="0 0 26 24" aria-hidden="true">
        <path d="M0 0h6v20H0z" fill="#5f7f3a" />
        <path d="M7 0h13v20H7z" fill="#d6dbe0" stroke="#424a52" strokeWidth="2" />
      </AppIcon>
      电池测试系统 - [打印 - 数据 - 第 1 页]
      <WindowButtons>
        <button type="button" aria-label="最小化">
          <svg viewBox="0 0 28 16"><path d="M4 3h20v6H4z" fill="#fff" stroke="#3d4a5a" /></svg>
        </button>
        <button type="button" aria-label="还原">
          <svg viewBox="0 0 28 16"><path d="M9 0v10h11V0M20 6h4V0" fill="none" stroke="#fff" strokeWidth="4" /></svg>
        </button>
        <button type="button" aria-label="关闭窗口">
          <svg viewBox="0 0 28 16"><path d="M6 11l8-9 8 9" fill="none" stroke="#fff" strokeWidth="5" /></svg>
        </button>
      </WindowButtons>
    </TitleBar>
    <MenuBar>
      <DocIcon viewBox="0 0 30 32" aria-hidden="true">
        <path d="M1 1h22l6 5v25H1z" fill="#fff" stroke="#4b4a50" strokeWidth="2" />
        <path d="M5 12l3-2v11M4 21h7" fill="none" stroke="#e0342c" strokeWidth="2" />
        <path d="M12 12q3-4 5 0 0 3-5 9h6" fill="none" stroke="#2336c9" strokeWidth="2" />
        <path d="M20 11q5-2 5 2 0 2-3 2 4 0 3 4-2 3-5 1" fill="none" stroke="#2c8f35" strokeWidth="2" />
      </DocIcon>
      {["文件(F)", "设置(S)", "命令(C)", "查看(V)", "窗口(W)", "帮助(H)"].map((item) => (
        <BarItem key={item} type="button">{item}</BarItem>
      ))}
      <DocButtons>
        <button type="button" aria-label="最小化文档">
          <svg viewBox="0 0 32 32"><path d="M10 23h12" stroke="#596f85" strokeWidth="4" /></svg>
        </button>
        <button type="button" aria-label="还原文档">
          <svg viewBox="0 0 32 32">
            <path d="M12 12V8h12v10h-5M12 9h12" fill="none" stroke="#596f85" strokeWidth="3" />
            <path d="M8 15h11v10H8zM8 16h11" fill="none" stroke="#596f85" strokeWidth="3" />
          </svg>
        </button>
        <button type="button" aria-label="关闭文档">
          <svg viewBox="0 0 32 32"><path d="M10 9l12 14M22 9L10 23" stroke="#596f85" strokeWidth="5" /></svg>
        </button>
      </DocButtons>
    </MenuBar>
    <Toolbar />
    <Split>
      <ChannelTree first={194} count={27} height={775} width={475} shift={0} />
      <TableArea>
        <DataTable>
          <colgroup>
            {columns.map(([name, width]) => (
              <col key={name} style={{ width }} />
            ))}
          </colgroup>
          <thead>
            <tr>
              {columns.map(([name]) => (
                <th key={name} scope="col">{name}</th>
              ))}
            </tr>
          </thead>
          <tbody>
            {tableRows.map((cells, i) => (
              <tr key={i}>
                {cells.map((cell, j) => (
                  <td key={j}>{cell}</td>
                ))}
              </tr>
            ))}
          </tbody>
        </DataTable>
        <TableScroll>
          <Scrollbar thumb={43} />
        </TableScroll>
        <Note $left={873} $top={194}>运行数据</Note>
      </TableArea>
    </Split>
  </Panel>
);

export default function App() {
  return (
    <>
      <GlobalStyle />
      <Gradients />
      <Page>
        <CurvePanel />
        <CardsPanel />
        <ParameterPanel />
        <DataPanel />
      </Page>
    </>
  );
}
